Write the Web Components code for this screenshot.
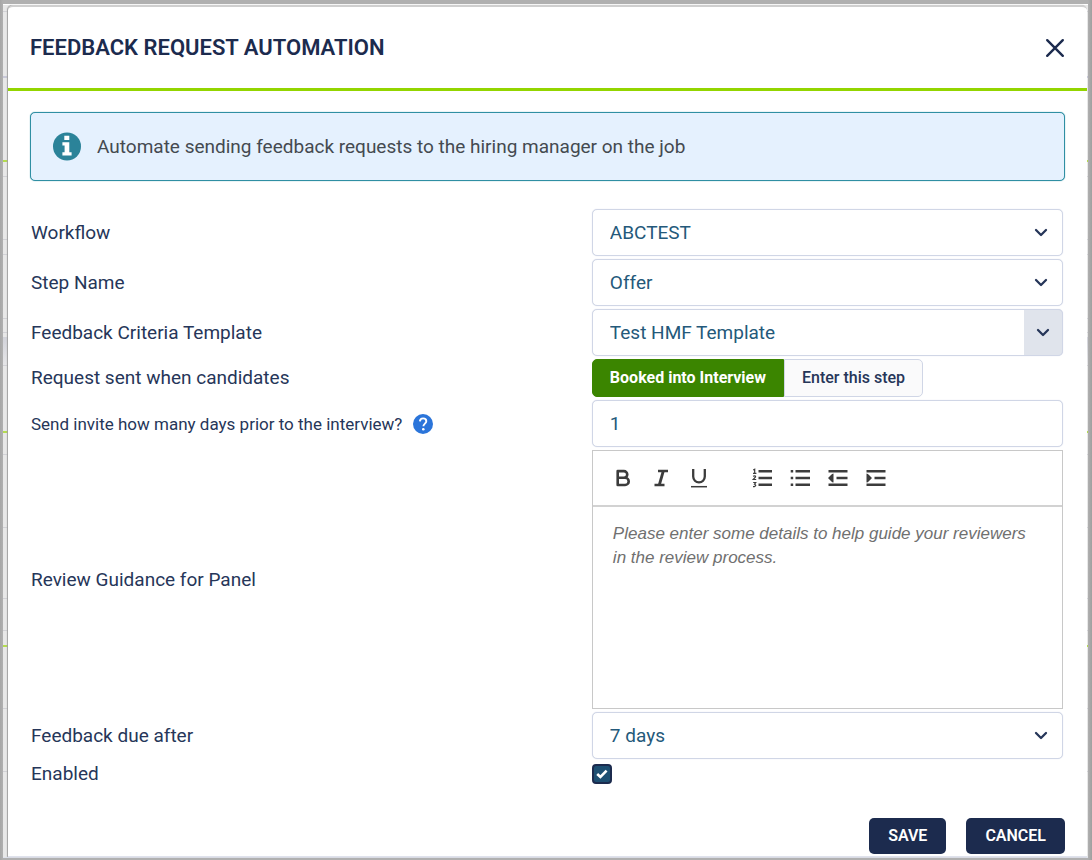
<!DOCTYPE html>
<html lang="en">
<head>
<meta charset="utf-8">
<meta name="viewport" content="width=device-width, initial-scale=1">
<title>Feedback Request Automation</title>
<style>
	body {
		margin: 0;
		background: #adadad;
		font-family: Roboto, "Liberation Sans", sans-serif;
		font-size: 19px;
		line-height: 24px;
		color: #263659;
		--navy: #1c2b4e;
		--teal: #24597a;
		--line: #d0d6e6;
		--green: #93d500;
	}
</style>
</head>
<body>

<modal-dialog heading="FEEDBACK REQUEST AUTOMATION">
	<info-notice>Automate sending feedback requests to the hiring manager on the job</info-notice>
	<form-rows>
		<select-field label="Workflow" value="ABCTEST"></select-field>
		<select-field label="Step Name" value="Offer"></select-field>
		<select-field label="Feedback Criteria Template" value="Test HMF Template" boxed></select-field>
		<toggle-field label="Request sent when candidates" options="Booked into Interview|Enter this step"></toggle-field>
		<number-field label="Send invite how many days prior to the interview?" value="1"></number-field>
		<editor-field label="Review Guidance for Panel" placeholder="Please enter some details to help guide your reviewers in the review process."></editor-field>
		<select-field label="Feedback due after" value="7 days"></select-field>
		<check-field label="Enabled"></check-field>
	</form-rows>
	<action-button slot="actions">SAVE</action-button>
	<action-button slot="actions">CANCEL</action-button>
</modal-dialog>

<script>
const rowStyles = `
	:host {
		display: grid;
		grid-template-columns: 25fr 21fr;
		align-items: center;
	}
	* { box-sizing: border-box; }
	button, input, select, textarea { font: inherit; margin: 0; }
	.box {
		width: 100%;
		height: 47px;
		padding: 0 17px;
		border: 1px solid var(--line);
		border-radius: 5px;
		background: white;
		color: var(--teal);
		box-shadow: 0 0 1px var(--line);
		outline: none;
	}
`;

class ModalDialog extends HTMLElement {
	constructor() {
		super();
		this.attachShadow({ mode: "open" });
		this.shadowRoot.innerHTML = `
    <style>
    :host {
      display: flex;
      flex-direction: column;
      box-sizing: border-box;
      min-height: 100vh;
      padding: 4px 4px 2px 3px;
      background: linear-gradient(90deg, #a6a6a6, #b0b0b0 3px, #b0b0b0 calc(100% - 4px), #9f9f9f);
    }
    /* the dimmed page behind, seen as a thin strip along the dialog */
    #page {
      --grey: #d2d2d6;
      --lime: #b4dc4e;
      flex: 1;
      display: flex;
      flex-direction: column;
      padding: 1px 1px 0 5px;
      border-bottom: 1px solid #dfe2ec;
      background:
        linear-gradient(white, white) 0 0 / 100% 1px no-repeat,
        linear-gradient(var(--grey), var(--grey)) 0 7px / 100% 1px no-repeat,
        linear-gradient(#c8c8d8, #c8c8d8) 0 72px / 100% 2px no-repeat,
        linear-gradient(var(--lime), var(--lime)) 0 156px / 100% 2px no-repeat,
        linear-gradient(var(--grey), var(--grey)) 0 172px / 100% 1px no-repeat,
        linear-gradient(var(--grey), var(--grey)) 0 235px / 100% 1px no-repeat,
        linear-gradient(var(--grey), var(--grey)) 0 250px / 100% 1px no-repeat,
        linear-gradient(var(--grey), var(--grey)) 0 314px / 100% 1px no-repeat,
        linear-gradient(var(--grey), var(--grey)) 0 328px / 100% 1px no-repeat,
        linear-gradient(#d2d3da, #e6e6e8) 0 333px / 100% 28px no-repeat,
        linear-gradient(var(--grey), var(--grey)) 0 361px / 100% 1px no-repeat,
        linear-gradient(var(--lime), var(--lime)) 0 427px / 100% 2px no-repeat,
        linear-gradient(var(--grey), var(--grey)) 0 450px / 100% 1px no-repeat,
        linear-gradient(var(--grey), var(--grey)) 0 523px / 100% 1px no-repeat,
        linear-gradient(var(--grey), var(--grey)) 0 594px / 100% 1px no-repeat,
        linear-gradient(var(--grey), var(--grey)) 0 626px / 100% 1px no-repeat,
        linear-gradient(var(--lime), var(--lime)) 0 641px / 100% 2px no-repeat,
        linear-gradient(var(--grey), var(--grey)) 0 704px / 100% 1px no-repeat,
        linear-gradient(var(--grey), var(--grey)) 0 767px / 100% 1px no-repeat,
        #e8e8e8;
    }
    #dialog {
      flex: 1;
      background: white;
      border-top: 2px solid #cfcfcf;
      border-bottom: 1px solid #dfe2ec;
      border-radius: 5px 5px 0 0;
      box-shadow: -1px 0 1px #a0a0a0;
    }
    header {
      display: flex;
      align-items: center;
      justify-content: space-between;
      height: 81px;
      padding: 0 22px;
      border-bottom: 3px solid var(--green);
    }
    h1 {
      margin: 0;
      font-size: 22px;
      line-height: 28px;
      font-weight: 600;
      color: var(--navy);
    }
    header button {
      display: flex;
      padding: 0;
      border: none;
      background: none;
    }
    main { padding: 21px 22px 0; }
    footer {
      display: flex;
      justify-content: flex-end;
      gap: 20px;
      padding: 32px 22px 0;
    }
    </style>
    <div id="page">
      <section id="dialog" role="dialog" aria-labelledby="heading">
        <header>
          <h1 id="heading"></h1>
          <button type="button" aria-label="Close">
            <svg width="20" height="20" viewBox="0 0 20 20" fill="none" stroke="#1c2b4e" stroke-width="2.4" stroke-linecap="round"><path d="M2.2 2.2l15.6 15.6M17.8 2.2L2.2 17.8"/></svg>
          </button>
        </header>
        <main><slot></slot></main>
        <footer><slot name="actions"></slot></footer>
      </section>
    </div>
    `;
		this.shadowRoot.querySelector("h1").textContent = this.getAttribute("heading");
		this.shadowRoot.querySelector("header button").addEventListener("click", this.close.bind(this));
	}
	close() {
		this.style.display = "none";
	}
}
customElements.define("modal-dialog", ModalDialog);

class InfoNotice extends HTMLElement {
	constructor() {
		super();
		this.attachShadow({ mode: "open" });
		this.shadowRoot.innerHTML = `
    <style>
    :host {
      display: flex;
      align-items: center;
      gap: 16px;
      padding: 19px 22px;
      border: 1px solid #2f8fa3;
      border-radius: 5px;
      box-shadow: 0 0 1px #2f8fa3;
      background: #e5f1fe;
      color: #444a50;
    }
    svg { flex: none; }
    </style>
    <svg width="28" height="29" viewBox="0 0 28 28"><circle cx="14" cy="14" r="14" fill="#2b8399"/><path fill="#fff" d="M11.3 3.2h5v4.2h-5zM9.4 9.7h6.9v10h2.3v3.4H9.4v-3.4h2.2v-6.6H9.4z"/></svg>
    <span><slot></slot></span>
    `;
	}
}
customElements.define("info-notice", InfoNotice);

class FormRows extends HTMLElement {
	constructor() {
		super();
		this.attachShadow({ mode: "open" });
		this.shadowRoot.innerHTML = `
    <style>
    :host {
      display: flex;
      flex-direction: column;
      gap: 3px;
      padding: 28px 2px 0 1px;
    }
    </style>
    <slot></slot>
    `;
	}
}
customElements.define("form-rows", FormRows);

class SelectField extends HTMLElement {
	constructor() {
		super();
		this.attachShadow({ mode: "open" });
		this.shadowRoot.innerHTML = `
    <style>
    ${rowStyles}
    .wrap { display: grid; align-items: center; }
    .wrap > * { grid-area: 1 / 1; }
    select { appearance: none; }
    .arrow {
      justify-self: end;
      display: flex;
      align-items: center;
      justify-content: center;
      width: 45px;
      height: 45px;
      pointer-events: none;
    }
    :host([boxed]) .arrow {
      width: 39px;
      height: 47px;
      border: 1px solid var(--line);
      border-left: none;
      border-radius: 0 5px 5px 0;
      background: #e0e4ec;
    }
    </style>
    <label for="control"></label>
    <div class="wrap">
      <select id="control" class="box"><option></option></select>
      <span class="arrow"><svg width="14" height="10" viewBox="0 0 14 10" fill="none" stroke="#263659" stroke-width="2.3" stroke-linecap="round" stroke-linejoin="round"><path d="M2 2l5 5 5-5"/></svg></span>
    </div>
    `;
		this.shadowRoot.querySelector("label").textContent = this.getAttribute("label");
		this.shadowRoot.querySelector("option").textContent = this.getAttribute("value");
	}
}
customElements.define("select-field", SelectField);

class ToggleField extends HTMLElement {
	constructor() {
		super();
		this.attachShadow({ mode: "open" });
		this.shadowRoot.innerHTML = `
    <style>
    ${rowStyles}
    .group { display: flex; }
    button {
      height: 38px;
      padding: 0 17px;
      border: 1px solid var(--line);
      border-radius: 0 5px 5px 0;
      background: #fafafb;
      color: #263659;
      font-size: 16px;
      font-weight: 500;
      white-space: nowrap;
    }
    button:first-child { border-radius: 5px 0 0 5px; }
    button[aria-pressed="true"] {
      border-color: #3b8500;
      background: #3b8500;
      color: white;
      font-weight: 700;
    }
    </style>
    <span id="label"></span>
    <div class="group" role="group" aria-labelledby="label"></div>
    `;
		this.shadowRoot.querySelector("#label").textContent = this.getAttribute("label");
		const group = this.shadowRoot.querySelector(".group");
		this.getAttribute("options").split("|").forEach((text, i) => {
			const button = document.createElement("button");
			button.type = "button";
			button.textContent = text;
			button.setAttribute("aria-pressed", i === 0);
			button.addEventListener("click", () => this.choose(button));
			group.append(button);
		});
	}
	choose(chosen) {
		this.shadowRoot.querySelectorAll("button").forEach((button) => {
			button.setAttribute("aria-pressed", button === chosen);
		});
	}
}
customElements.define("toggle-field", ToggleField);

class NumberField extends HTMLElement {
	constructor() {
		super();
		this.attachShadow({ mode: "open" });
		this.shadowRoot.innerHTML = `
    <style>
    ${rowStyles}
    .caption { display: flex; align-items: center; gap: 11px; font-size: 17px; }
    </style>
    <div class="caption">
      <label for="control"></label>
      <svg width="20" height="20" viewBox="0 0 20 20" role="img" aria-label="Help"><circle cx="10" cy="10" r="10" fill="#2b75da"/><path d="M6.9 7.4c.1-1.9 1.4-3 3.2-3s3.2 1.1 3.2 2.8c0 2.3-2.9 2.5-2.9 5" fill="none" stroke="#fff" stroke-width="1.9"/><circle cx="10.3" cy="15.3" r="1.3" fill="#fff"/></svg>
    </div>
    <input id="control" class="box" type="text" inputmode="numeric">
    `;
		this.shadowRoot.querySelector("label").textContent = this.getAttribute("label");
		this.shadowRoot.querySelector("input").value = this.getAttribute("value");
	}
}
customElements.define("number-field", NumberField);

class EditorField extends HTMLElement {
	constructor() {
		super();
		this.attachShadow({ mode: "open" });
		this.shadowRoot.innerHTML = `
    <style>
    ${rowStyles}
    .editor {
      display: flex;
      flex-direction: column;
      border: 1px solid #c8c8c8;
    }
    .toolbar {
      display: flex;
      gap: 14px;
      padding: 15px 18px;
      border-bottom: 2px solid #d2d2d2;
    }
    .toolbar button {
      display: flex;
      padding: 0;
      border: none;
      background: none;
      color: #3c3c3c;
    }
    .toolbar button:nth-child(4) { margin-left: 25px; }
    textarea {
      display: block;
      width: 100%;
      height: 201px;
      padding: 15px 20px;
      border: none;
      outline: none;
      resize: none;
      background: white;
      font-family: "Liberation Sans", Arial, sans-serif;
      font-size: 17px;
      overflow: hidden;
    }
    textarea::placeholder {
      color: #707070;
      font-style: italic;
      opacity: 1;
    }
    </style>
    <label for="control"></label>
    <div class="editor">
      <div class="toolbar" role="toolbar" aria-label="Formatting">
        <button type="button" aria-label="Bold"><svg width="24" height="24" viewBox="0 0 24 24" fill="none" stroke="currentColor" stroke-width="2.6" stroke-linejoin="round"><path d="M6.7 5.1h6.2a3.3 3.3 0 0 1 0 6.7H6.7zM6.7 11.8h7.4a3.6 3.6 0 0 1 0 7.2H6.7z"/></svg></button>
        <button type="button" aria-label="Italic"><svg width="24" height="24" viewBox="0 0 24 24" fill="none" stroke="currentColor" stroke-width="2.3"><path d="M9 5h10M5.500 19h10"/><path d="M14.3 5l-4 14" stroke-width="2.8"/></svg></button>
        <button type="button" aria-label="Underline"><svg width="24" height="24" viewBox="0 0 24 24" fill="none" stroke="currentColor"><path d="M6.2 3v7.600a5.8 5.8 0 0 0 11.600 0V3" stroke-width="2.3"/><path d="M4 20.700h16" stroke-width="1.5"/></svg></button>
        <button type="button" aria-label="Numbered list"><svg width="24" height="24" viewBox="0 0 24 24" fill="none" stroke="currentColor"><path d="M8.500 5.200H22M8.500 12H22M8.500 18.800H22" stroke-width="2.6"/><path d="M3.200 4l1.500-.8v4M3 7.300h3.400M3 10.300q2.600-1 2.600.5L3.200 13.500h3M3.200 16.500h2.500L4.500 18.200q2.500.8 0 2.400H3" stroke-width="1.2"/></svg></button>
        <button type="button" aria-label="Bulleted list"><svg width="24" height="24" viewBox="0 0 24 24" fill="none" stroke="currentColor" stroke-width="2.6"><path d="M7.500 5.200H22M7.500 12H22M7.500 18.800H22M2.700 5.200h2.500M2.700 12h2.500M2.700 18.800h2.500"/></svg></button>
        <button type="button" aria-label="Outdent"><svg width="24" height="24" viewBox="0 0 24 24" fill="none" stroke="currentColor" stroke-width="2.6"><path d="M2.500 5.200h19M10.500 12h11M2.500 18.800h19"/><path d="M7.500 7.500v9q-1.500 0-2.500-1.500L2 12l3-3q1-1.500 2.500-1.500z" fill="currentColor" stroke="none"/></svg></button>
        <button type="button" aria-label="Indent"><svg width="24" height="24" viewBox="0 0 24 24" fill="none" stroke="currentColor" stroke-width="2.6"><path d="M2.500 5.200h19M10.500 12h11M2.500 18.800h19"/><path d="M2.500 7.500v9q1.500 0 2.500-1.500l3-3-3-3q-1-1.500-2.500-1.500z" fill="currentColor" stroke="none"/></svg></button>
      </div>
      <textarea id="control"></textarea>
    </div>
    `;
		this.shadowRoot.querySelector("label").textContent = this.getAttribute("label");
		this.shadowRoot.querySelector("textarea").placeholder = this.getAttribute("placeholder");
	}
}
customElements.define("editor-field", EditorField);

class CheckField extends HTMLElement {
	constructor() {
		super();
		this.attachShadow({ mode: "open" });
		this.shadowRoot.innerHTML = `
    <style>
    ${rowStyles}
    .wrap { display: grid; width: 20px; height: 20px; }
    .wrap > * { grid-area: 1 / 1; place-self: center; }
    input {
      appearance: none;
      width: 20px;
      height: 20px;
      border: 2px solid var(--navy);
      border-radius: 4px;
      background: white;
    }
    input:checked { background: #1d4f72; }
    svg { pointer-events: none; }
    </style>
    <label for="control"></label>
    <div class="wrap">
      <input id="control" type="checkbox" checked>
      <svg width="12" height="10" viewBox="0 0 12 10" fill="none" stroke="#fff" stroke-width="2.6"><path d="M1.2 5l3.2 3 6.2-6.3"/></svg>
    </div>
    `;
		this.shadowRoot.querySelector("label").textContent = this.getAttribute("label");
	}
}
customElements.define("check-field", CheckField);

class ActionButton extends HTMLElement {
	constructor() {
		super();
		this.attachShadow({ mode: "open" });
		this.shadowRoot.innerHTML = `
    <style>
    :host { display: block; }
    button {
      display: block;
      height: 36px;
      padding: 0 19px;
      border: none;
      border-radius: 5px;
      background: var(--navy);
      color: white;
      font: inherit;
      font-size: 16px;
      font-weight: 600;
    }
    </style>
    <button type="button"><slot></slot></button>
    `;
	}
}
customElements.define("action-button", ActionButton);
</script>
</body>
</html>
